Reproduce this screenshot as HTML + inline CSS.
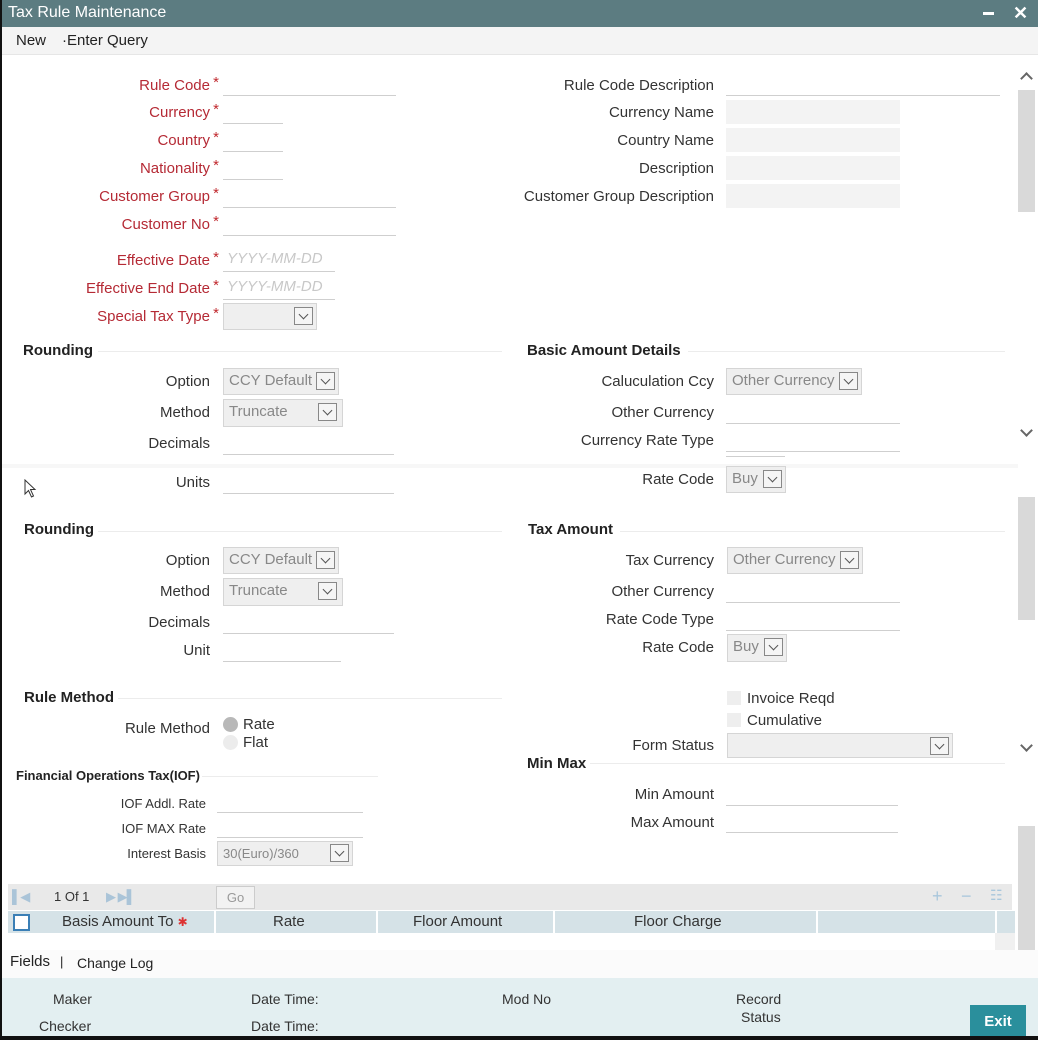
<!DOCTYPE html>
<html><head><meta charset="utf-8"><style>
*{margin:0;padding:0;box-sizing:border-box}
body{width:1038px;height:1040px;position:relative;overflow:hidden;background:#fff;font-family:"Liberation Sans",Arial,sans-serif;font-size:15px;color:#333}
div,span{position:absolute}
.l{left:0;text-align:right;white-space:nowrap;line-height:18px;margin-top:1px}
.r{color:#b52a35}
.r:after{content:"*";position:absolute;right:-9px;top:-3px;font-size:15px;color:#c0282d}
.ln{height:1px;background:#cfcfcf}
.bx{background:#f3f3f3;height:24px}
.sel{background:#efefef;border:1px solid #d5d5d5;color:#888;line-height:24px;padding-left:5px;white-space:nowrap}
.sel i{position:absolute;right:3px;top:3px;width:19px;height:18px;border:1px solid #888;background:#f5f5f5}
.sel i:after{content:"";position:absolute;left:5px;top:3px;width:6px;height:6px;border-right:1.5px solid #555;border-bottom:1.5px solid #555;transform:rotate(45deg)}
.h{font-weight:bold;color:#222;line-height:18px}
.hl{height:1px;background:#ececec}
.ph{color:#c8c8c8;font-style:italic;line-height:18px}
.s13{font-size:13px}
.ch{width:9px;height:9px;border-right:2px solid #666;border-bottom:2px solid #666}
</style></head><body>
<div style="left:0;top:0;width:1038px;height:27px;background:#5c7c81"></div>
<div style="left:8px;top:4px;color:#fff;font-size:16px">Tax Rule Maintenance</div>
<div style="left:983px;top:12px;width:11px;height:3px;background:#fff"></div>
<div style="left:1013px;top:3px;color:#fff;font-size:18px;font-weight:bold">✕</div>
<div style="left:0;top:27px;width:1038px;height:28px;background:#f4f4f4;border-bottom:1px solid #e6e6e6"></div>
<div style="left:16px;top:32px;color:#222">New</div>
<div style="left:62px;top:32px;color:#222">·Enter Query</div>

<div class="l r" style="width:210px;top:76px">Rule Code</div><div class="ln" style="left:223px;top:95px;width:173px"></div>
<div class="l r" style="width:210px;top:103px">Currency</div><div class="ln" style="left:223px;top:123px;width:60px"></div>
<div class="l r" style="width:210px;top:131px">Country</div><div class="ln" style="left:223px;top:151px;width:60px"></div>
<div class="l r" style="width:210px;top:159px">Nationality</div><div class="ln" style="left:223px;top:179px;width:60px"></div>
<div class="l r" style="width:210px;top:187px">Customer Group</div><div class="ln" style="left:223px;top:207px;width:173px"></div>
<div class="l r" style="width:210px;top:215px">Customer No</div><div class="ln" style="left:223px;top:235px;width:173px"></div>
<div class="l r" style="width:210px;top:251px">Effective Date</div><div class="ph" style="left:227px;top:250px">YYYY-MM-DD</div><div class="ln" style="left:223px;top:271px;width:112px"></div>
<div class="l r" style="width:210px;top:279px">Effective End Date</div><div class="ph" style="left:227px;top:278px">YYYY-MM-DD</div><div class="ln" style="left:223px;top:299px;width:112px"></div>
<div class="l r" style="width:210px;top:307px">Special Tax Type</div><div class="sel" style="left:223px;top:303px;width:94px;height:27px"><i></i></div>

<div class="l" style="width:714px;top:76px">Rule Code Description</div><div class="ln" style="left:726px;top:95px;width:274px"></div>
<div class="l" style="width:714px;top:103px">Currency Name</div><div class="bx" style="left:726px;top:100px;width:174px"></div>
<div class="l" style="width:714px;top:131px">Country Name</div><div class="bx" style="left:726px;top:128px;width:174px"></div>
<div class="l" style="width:714px;top:159px">Description</div><div class="bx" style="left:726px;top:156px;width:174px"></div>
<div class="l" style="width:714px;top:187px">Customer Group Description</div><div class="bx" style="left:726px;top:184px;width:174px"></div>

<div class="h" style="left:23px;top:342px">Rounding</div><div class="hl" style="left:98px;top:351px;width:404px"></div>
<div class="h" style="left:527px;top:342px">Basic Amount Details</div><div class="hl" style="left:688px;top:351px;width:317px"></div>
<div class="l" style="width:210px;top:372px">Option</div><div class="sel" style="left:223px;top:368px;width:116px;height:27px">CCY Default<i></i></div>
<div class="l" style="width:210px;top:403px">Method</div><div class="sel" style="left:223px;top:399px;width:120px;height:28px">Truncate<i style="right:5px"></i></div>
<div class="l" style="width:210px;top:434px">Decimals</div><div class="ln" style="left:223px;top:454px;width:171px"></div>
<div class="l" style="width:714px;top:372px">Caluculation Ccy</div><div class="sel" style="left:726px;top:368px;width:136px;height:27px">Other Currency<i></i></div>
<div class="l" style="width:714px;top:403px">Other Currency</div><div class="ln" style="left:726px;top:423px;width:174px"></div>
<div class="l" style="width:714px;top:431px">Currency Rate Type</div><div class="ln" style="left:726px;top:451px;width:174px"></div>
<div class="ln" style="left:726px;top:456px;width:59px"></div>
<div style="left:1018px;top:90px;width:17px;height:122px;background:#d9d9d9"></div>
<div class="ch" style="left:1022px;top:74px;transform:rotate(-135deg)"></div>
<div class="ch" style="left:1022px;top:426px;transform:rotate(45deg)"></div>
<div style="left:0;top:464px;width:1018px;height:4px;background:#f7f7f7"></div>

<svg style="position:absolute;left:24px;top:479px" width="14" height="20" viewBox="0 0 14 20"><path d="M1 1 L1 15 L4.5 11.5 L7.5 18 L9.5 17 L6.5 10.5 L11 10.5 Z" fill="#fff" stroke="#333" stroke-width="1"/></svg>
<div class="l" style="width:210px;top:473px">Units</div><div class="ln" style="left:223px;top:493px;width:171px"></div>
<div class="l" style="width:714px;top:470px">Rate Code</div><div class="sel" style="left:726px;top:466px;width:60px;height:27px">Buy<i></i></div>

<div class="h" style="left:24px;top:521px">Rounding</div><div class="hl" style="left:98px;top:531px;width:404px"></div>
<div class="h" style="left:528px;top:521px">Tax Amount</div><div class="hl" style="left:620px;top:531px;width:385px"></div>
<div class="l" style="width:210px;top:551px">Option</div><div class="sel" style="left:223px;top:547px;width:116px;height:27px">CCY Default<i></i></div>
<div class="l" style="width:210px;top:582px">Method</div><div class="sel" style="left:223px;top:578px;width:120px;height:28px">Truncate<i style="right:5px"></i></div>
<div class="l" style="width:210px;top:613px">Decimals</div><div class="ln" style="left:223px;top:633px;width:171px"></div>
<div class="l" style="width:210px;top:641px">Unit</div><div class="ln" style="left:223px;top:661px;width:118px"></div>
<div class="l" style="width:714px;top:551px">Tax Currency</div><div class="sel" style="left:727px;top:547px;width:136px;height:27px">Other Currency<i></i></div>
<div class="l" style="width:714px;top:582px">Other Currency</div><div class="ln" style="left:726px;top:602px;width:174px"></div>
<div class="l" style="width:714px;top:610px">Rate Code Type</div><div class="ln" style="left:726px;top:630px;width:174px"></div>
<div class="l" style="width:714px;top:638px">Rate Code</div><div class="sel" style="left:727px;top:634px;width:60px;height:28px">Buy<i></i></div>

<div class="h" style="left:24px;top:689px">Rule Method</div><div class="hl" style="left:118px;top:698px;width:384px"></div>
<div class="l" style="width:210px;top:719px">Rule Method</div>
<div style="left:223px;top:717px;width:15px;height:15px;border-radius:50%;background:#b8b8b8"></div>
<div style="left:223px;top:735px;width:15px;height:15px;border-radius:50%;background:#ececec"></div>
<div style="left:243px;top:716px;line-height:18px">Rate</div><div style="left:243px;top:734px;line-height:18px">Flat</div>

<div style="left:727px;top:691px;width:14px;height:14px;background:#eeeeee"></div><div style="left:747px;top:690px;line-height:18px">Invoice Reqd</div>
<div style="left:727px;top:713px;width:14px;height:14px;background:#eeeeee"></div><div style="left:747px;top:712px;line-height:18px">Cumulative</div>
<div class="l" style="width:714px;top:736px">Form Status</div><div class="sel" style="left:727px;top:733px;width:226px;height:25px"><i></i></div>
<div class="h" style="left:527px;top:755px">Min Max</div><div class="hl" style="left:590px;top:763px;width:415px"></div>
<div class="l" style="width:714px;top:785px">Min Amount</div><div class="ln" style="left:726px;top:805px;width:172px"></div>
<div class="l" style="width:714px;top:813px">Max Amount</div><div class="ln" style="left:726px;top:832px;width:172px"></div>

<div class="h s13" style="left:16px;top:767px">Financial Operations Tax(IOF)</div><div class="hl" style="left:202px;top:776px;width:176px"></div>
<div class="l s13" style="width:206px;top:794px">IOF Addl. Rate</div><div class="ln" style="left:217px;top:812px;width:146px"></div>
<div class="l s13" style="width:206px;top:819px">IOF MAX Rate</div><div class="ln" style="left:217px;top:837px;width:146px"></div>
<div class="l s13" style="width:206px;top:844px">Interest Basis</div><div class="sel s13" style="left:217px;top:841px;width:136px;height:25px;line-height:23px">30(Euro)/360<i style="top:2px"></i></div>

<div style="left:1018px;top:497px;width:17px;height:123px;background:#d9d9d9"></div>
<div class="ch" style="left:1022px;top:741px;transform:rotate(45deg)"></div>
<div style="left:1018px;top:826px;width:17px;height:124px;background:#d9d9d9"></div>

<div style="left:8px;top:884px;width:1004px;height:26px;background:#e9e9e9"></div>
<div style="left:12px;top:889px;color:#aac4d8;font-size:13px;letter-spacing:-1px">▌◀</div>
<div style="left:54px;top:889px;font-size:13px;color:#333">1 Of 1</div>
<div style="left:106px;top:889px;color:#aac4d8;font-size:13px;letter-spacing:-1px">▶ ▶▌</div>
<div style="left:216px;top:886px;width:39px;height:23px;border:1px solid #ccc;background:#f2f2f2;color:#999;font-size:13px;text-align:center;line-height:21px">Go</div>
<div style="left:932px;top:886px;color:#a9c7dc;font-size:18px">+</div>
<div style="left:961px;top:886px;color:#a9c7dc;font-size:18px">−</div>
<div style="left:990px;top:887px;color:#a9c7dc;font-size:14px">☷</div>
<div style="left:8px;top:911px;width:1007px;height:22px;background:#d5e2e7"></div>
<div style="left:13px;top:914px;width:17px;height:17px;border:2px solid #3a7fb6;background:#fff"></div>
<div style="left:214px;top:911px;width:2px;height:22px;background:#fff"></div>
<div style="left:376px;top:911px;width:2px;height:22px;background:#fff"></div>
<div style="left:553px;top:911px;width:2px;height:22px;background:#fff"></div>
<div style="left:816px;top:911px;width:2px;height:22px;background:#fff"></div>
<div style="left:995px;top:911px;width:2px;height:22px;background:#fff"></div>
<div style="left:62px;top:913px;line-height:18px">Basis Amount To <span style="position:static;color:#d33;font-size:12px">✱</span></div>
<div style="left:273px;top:913px;line-height:18px">Rate</div>
<div style="left:413px;top:913px;line-height:18px">Floor Amount</div>
<div style="left:634px;top:913px;line-height:18px">Floor Charge</div>
<div style="left:8px;top:933px;width:1007px;height:17px;background:#fff"></div>
<div style="left:995px;top:933px;width:20px;height:17px;background:#f0f0f0"></div>

<div style="left:0;top:950px;width:1038px;height:28px;background:#fbfbfb"></div>
<div style="left:10px;top:953px;color:#222">Fields</div>
<div style="left:60px;top:954px;color:#222;font-size:13px">|</div>
<div style="left:77px;top:955px;color:#222;font-size:14px">Change Log</div>

<div style="left:0;top:978px;width:1038px;height:58px;background:#e3eff1"></div>
<div style="left:53px;top:991px;color:#333;font-size:14px">Maker</div>
<div style="left:39px;top:1018px;color:#333;font-size:14px">Checker</div>
<div style="left:251px;top:991px;color:#333;font-size:14px">Date Time:</div>
<div style="left:251px;top:1018px;color:#333;font-size:14px">Date Time:</div>
<div style="left:502px;top:991px;color:#333;font-size:14px">Mod No</div>
<div style="left:736px;top:991px;color:#333;font-size:14px">Record</div>
<div style="left:741px;top:1009px;color:#333;font-size:14px">Status</div>
<div style="left:970px;top:1005px;width:56px;height:31px;background:#2a8f9c;color:#fff;font-weight:bold;text-align:center;line-height:33px">Exit</div>
<div style="left:0;top:0;width:2px;height:1040px;background:#111"></div>
<div style="left:0;top:1036px;width:1038px;height:4px;background:#111"></div>
</body></html>
